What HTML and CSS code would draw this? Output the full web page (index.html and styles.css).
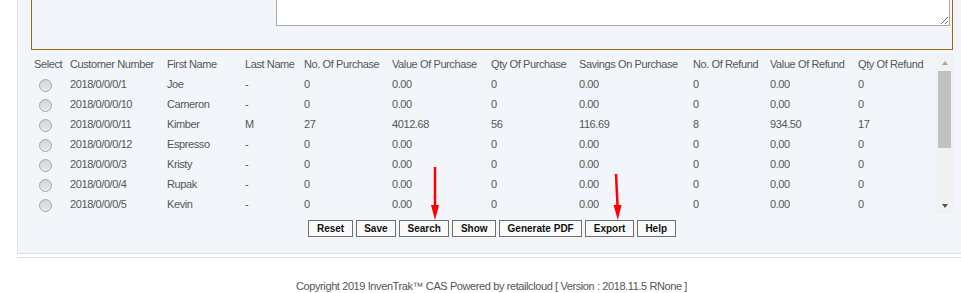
FILE: index.html
```html
<!DOCTYPE html>
<html lang="en">
<head>
    <meta charset="UTF-8">
    <title>Customer Maintenance</title>
    <link rel="stylesheet" href="styles.css">
</head>
<body>
    <div class="page">
        <div class="panel">
            <fieldset class="notes-box">
                <textarea class="notes" name="notes"></textarea>
            </fieldset>
            <div class="grid-wrap">
                <div class="grid-view">
                    <table class="grid">
                        <colgroup>
                            <col class="c-select">
                            <col class="c-number">
                            <col class="c-first">
                            <col class="c-last">
                            <col class="c-nop">
                            <col class="c-vop">
                            <col class="c-qop">
                            <col class="c-sop">
                            <col class="c-nor">
                            <col class="c-vor">
                            <col class="c-qor">
                        </colgroup>
                        <thead>
                            <tr>
                                <th>Select</th>
                                <th>Customer Number</th>
                                <th>First Name</th>
                                <th>Last Name</th>
                                <th>No. Of Purchase</th>
                                <th>Value Of Purchase</th>
                                <th>Qty Of Purchase</th>
                                <th>Savings On Purchase</th>
                                <th>No. Of Refund</th>
                                <th>Value Of Refund</th>
                                <th>Qty Of Refund</th>
                            </tr>
                        </thead>
                        <tbody>
                            <tr><td><input type="radio" name="cust"></td><td>2018/0/0/0/1</td><td>Joe</td><td>-</td><td>0</td><td>0.00</td><td>0</td><td>0.00</td><td>0</td><td>0.00</td><td>0</td></tr>
                            <tr><td><input type="radio" name="cust"></td><td>2018/0/0/0/10</td><td>Cameron</td><td>-</td><td>0</td><td>0.00</td><td>0</td><td>0.00</td><td>0</td><td>0.00</td><td>0</td></tr>
                            <tr><td><input type="radio" name="cust"></td><td>2018/0/0/0/11</td><td>Kimber</td><td>M</td><td>27</td><td>4012.68</td><td>56</td><td>116.69</td><td>8</td><td>934.50</td><td>17</td></tr>
                            <tr><td><input type="radio" name="cust"></td><td>2018/0/0/0/12</td><td>Espresso</td><td>-</td><td>0</td><td>0.00</td><td>0</td><td>0.00</td><td>0</td><td>0.00</td><td>0</td></tr>
                            <tr><td><input type="radio" name="cust"></td><td>2018/0/0/0/3</td><td>Kristy</td><td>-</td><td>0</td><td>0.00</td><td>0</td><td>0.00</td><td>0</td><td>0.00</td><td>0</td></tr>
                            <tr><td><input type="radio" name="cust"></td><td>2018/0/0/0/4</td><td>Rupak</td><td>-</td><td>0</td><td>0.00</td><td>0</td><td>0.00</td><td>0</td><td>0.00</td><td>0</td></tr>
                            <tr><td><input type="radio" name="cust"></td><td>2018/0/0/0/5</td><td>Kevin</td><td>-</td><td>0</td><td>0.00</td><td>0</td><td>0.00</td><td>0</td><td>0.00</td><td>0</td></tr>
                        </tbody>
                    </table>
                </div>
                <div class="vscroll">
                    <div class="vs-btn"><span class="vs-up"></span></div>
                    <div class="vs-track"><div class="vs-thumb"></div></div>
                    <div class="vs-btn"><span class="vs-down"></span></div>
                </div>
            </div>
            <div class="actions">
                <button type="button">Reset</button>
                <button type="button">Save</button>
                <button type="button">Search</button>
                <button type="button">Show</button>
                <button type="button">Generate PDF</button>
                <button type="button">Export</button>
                <button type="button">Help</button>
            </div>
        </div>
        <div class="footer">Copyright 2019 InvenTrak™ CAS Powered by retailcloud [ Version : 2018.11.5 RNone ]</div>
    </div>

    <svg class="markers" width="961" height="293" viewBox="0 0 961 293">
        <line x1="435" y1="167" x2="435" y2="207" stroke="#ff0000" stroke-width="2.5"/>
        <polygon points="431,205 439,205 435,220" fill="#ff0000"/>
        <line x1="616" y1="174" x2="617.6" y2="207" stroke="#ff0000" stroke-width="2.5"/>
        <polygon points="613.5,205 621.5,205 617.8,220" fill="#ff0000"/>
    </svg>
</body>
</html>
```
FILE: styles.css
```css
html {
    overflow: hidden;
}
body {
    margin: 0;
    background-color: #fff;
    font-family: 'Liberation Sans', Arial, sans-serif;
    font-size: 11px;
    letter-spacing: -0.4px;
    color: #555;
}
.page {
    width: 949px;
    margin: -61px 0 0 17px;
}
.panel {
    background-color: #f2f6fa;
    border: 1px solid #dedede;
    border-right: 0;
    padding: 13px 13px 16px 13px;
}
.notes-box {
    margin: 0;
    min-width: 0;
    border: 1px solid #a0680f;
    padding: 10px 2px 23px 0;
}
.notes {
    display: block;
    margin-left: auto;
    width: 674px;
    height: 62px;
    box-sizing: border-box;
    border: 1px solid #a9a9a9;
    background-color: #fff;
    padding: 2px;
}
.grid-wrap {
    display: flex;
    margin-top: 4px;
    height: 160px;
}
.grid-view {
    flex: 1;
    overflow: hidden;
}
.vscroll {
    width: 17px;
    display: flex;
    flex-direction: column;
    background-color: #f1f1f1;
}
.vs-btn {
    height: 17px;
    display: flex;
    align-items: center;
    justify-content: center;
}
.vs-up,
.vs-down {
    width: 0;
    height: 0;
    border-left: 3.5px solid transparent;
    border-right: 3.5px solid transparent;
}
.vs-up {
    border-bottom: 4px solid #a3a3a3;
}
.vs-down {
    border-top: 4px solid #505050;
}
.vs-track {
    flex: 1;
    padding: 0 2px;
}
.vs-thumb {
    height: 77px;
    background-color: #c1c1c1;
}
.grid {
    width: 904px;
    table-layout: fixed;
    border-collapse: collapse;
}
.c-select { width: 36px; }
.c-number { width: 97px; }
.c-first { width: 78px; }
.c-last { width: 59px; }
.c-nop { width: 88px; }
.c-vop { width: 99px; }
.c-qop { width: 88px; }
.c-sop { width: 114px; }
.c-nor { width: 77px; }
.c-vor { width: 88px; }
.c-qor { width: 80px; }
.grid th,
.grid td {
    height: 20px;
    padding: 0 3px;
    text-align: left;
    font-weight: normal;
    white-space: nowrap;
    overflow: hidden;
    color: #555;
}
.grid input[type=radio] {
    -webkit-appearance: none;
    appearance: none;
    width: 13px;
    height: 13px;
    box-sizing: border-box;
    margin: 3px 3px 0 5px;
    border: 1px solid #a8a8a8;
    border-radius: 50%;
    background: linear-gradient(#d4d4d4, #e9e9e9);
    vertical-align: middle;
}
.actions {
    display: flex;
    justify-content: center;
    gap: 3px;
    margin-top: 6px;
}
.actions button {
    height: 17px;
    padding: 0 7.5px;
    border: 1px solid #707070;
    border-radius: 0;
    background-color: #f9f9f9;
    color: #111;
    font-family: 'Liberation Sans', Arial, sans-serif;
    font-size: 10px;
    font-weight: bold;
    letter-spacing: 0;
    line-height: 15px;
}
.footer {
    margin-top: 3px;
    border-top: 1px solid #dedede;
    padding-top: 21px;
    text-align: center;
    line-height: 14px;
    color: #555;
}
.markers {
    position: absolute;
    top: 0;
    left: 0;
    pointer-events: none;
}
```
